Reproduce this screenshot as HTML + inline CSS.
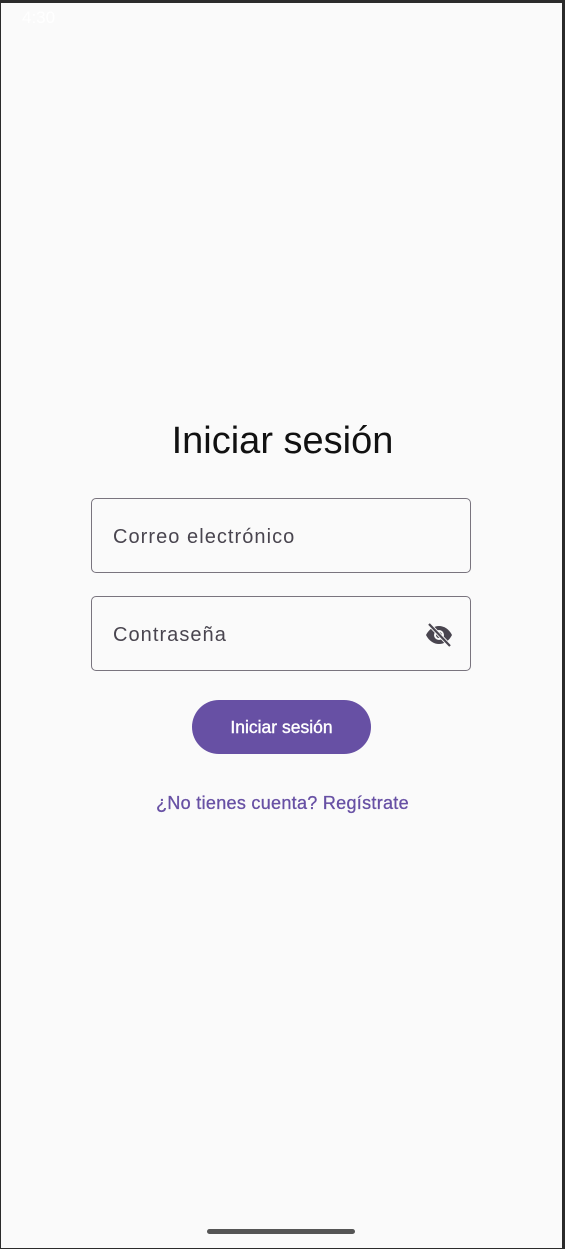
<!DOCTYPE html>
<html><head><meta charset="utf-8"><style>
html,body{margin:0;padding:0}
body{width:565px;height:1249px;position:relative;background:#2b2b2b;font-family:"Liberation Sans",sans-serif;overflow:hidden}
.scr{position:absolute;left:1px;top:3px;width:561px;height:1245px;background:#fafafa}
.title{position:absolute;left:0;width:565px;top:420px;text-align:center;font-size:38px;color:#111}
.field{position:absolute;left:91px;width:380px;height:75px;border:1.5px solid #79747e;border-radius:5px;box-sizing:border-box}
.field span{position:absolute;left:21px;top:27px;font-size:20px;color:#49454f;letter-spacing:1.05px}
.btn{position:absolute;left:192px;top:700px;width:179px;height:54px;border-radius:27px;background:#6750a4;color:#fff;font-size:17.5px;text-align:center;line-height:54px;-webkit-text-stroke:0.4px #fff}
.link{position:absolute;left:0;width:565px;top:793px;text-align:center;color:#6750a4;font-size:18px;letter-spacing:0.3px;-webkit-text-stroke:0.3px #6750a4}
.bar{position:absolute;left:207px;top:1229px;width:148px;height:5px;border-radius:3px;background:#555}
.sb{position:absolute;top:8px;color:#fff;font-size:17px}
</style></head><body>
<div class="scr"></div>
<div class="sb" style="left:22px">4:30</div>
<div class="title">Iniciar sesión</div>
<div class="field" style="top:498px"><span>Correo electrónico</span></div>
<div class="field" style="top:596px"><span>Contraseña</span>
<svg style="position:absolute;left:332px;top:25px" width="30" height="26" viewBox="0 0 30 26">
<path d="M2 13C5 7 10 4 15 4s10 3 13 9c-3 6-8 9-13 9S5 19 2 13z" fill="#49454f"/>
<circle cx="15" cy="13" r="5" fill="#fafafa"/><circle cx="15" cy="13" r="3" fill="#49454f"/>
<line x1="5" y1="2" x2="26" y2="24" stroke="#fafafa" stroke-width="4"/>
<line x1="5" y1="2" x2="26" y2="24" stroke="#49454f" stroke-width="2.2"/>
</svg></div>
<div class="btn">Iniciar sesión</div>
<div class="link">¿No tienes cuenta? Regístrate</div>
<div class="bar"></div>
</body></html>
